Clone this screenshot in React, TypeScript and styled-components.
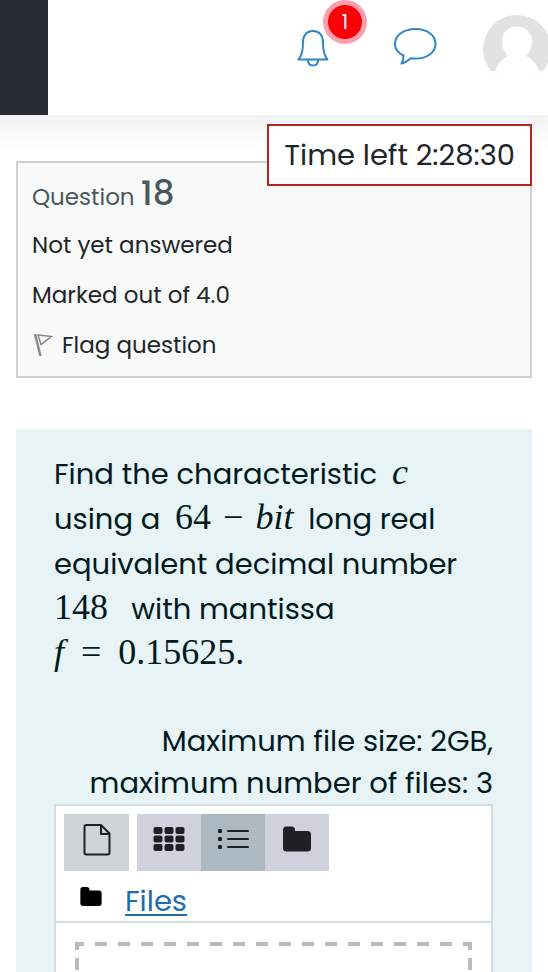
import React from "react";
import styled, { createGlobalStyle } from "styled-components";

const GlobalStyle = createGlobalStyle`
  *, *::before, *::after { box-sizing: border-box; }
  body {
    margin: 0;
    background: #fff;
    color: #212529;
    font-family: Poppins, Inter, "Noto Sans", sans-serif;
    font-size: 24px;
  }
  button { font: inherit; color: inherit; border: 0; padding: 0; background: none; cursor: pointer; }
  svg { display: block; }
`;

const Page = styled.div`
  height: 100vh;
  overflow-x: hidden;
  overflow-y: auto;
  scrollbar-width: none;
`;

const TopBar = styled.header`
  display: flex;
  align-items: stretch;
  justify-content: space-between;
  height: 115px;
  background: #fff;
`;

const DrawerToggle = styled.button`
  width: 48px;
  background: #272b34;
`;

const TopActions = styled.nav`
  display: flex;
  align-items: flex-start;
  padding-top: 15px;
  margin-right: -3px;
`;

const IconButton = styled.button<{ $gap: number }>`
  position: relative;
  display: flex;
  align-items: center;
  height: 66px;
  margin-right: ${(p) => p.$gap}px;
  color: #2f86c6;
`;

const Badge = styled.span`
  position: absolute;
  top: -15px;
  left: 27px;
  width: 44px;
  height: 44px;
  border: 5px solid #ff9fae;
  border-radius: 50%;
  background: #fb0007;
  color: #fff;
  font-size: 20px;
  line-height: 34px;
  text-align: center;
`;

const Main = styled.main`
  display: flex;
  flex-direction: column;
  gap: 51px;
  padding: 46px 16px 0;
  position: relative;
  background: linear-gradient(#f3f3f4, #fff 38px);
`;

const Timer = styled.div`
  position: absolute;
  top: 9px;
  right: 16px;
  padding: 0 15px;
  border: 2px solid #b8221f;
  background: #fff;
  font-size: 29px;
  line-height: 58px;
  white-space: nowrap;
`;

const InfoCard = styled.section`
  display: flex;
  flex-direction: column;
  align-items: flex-start;
  padding: 12px 14px 6px;
  border: 2px solid #cad1d5;
  background: #f8faf9;
  font-size: 23px;
  line-height: 50px;
`;

const QuestionTitle = styled.h3`
  margin: 0;
  color: #49585f;
  font-size: 23px;
  font-weight: 400;
  line-height: 45px;
`;

const QuestionNumber = styled.span`
  font-size: 34px;
  font-weight: 500;
  line-height: 1;
`;

const FlagButton = styled.button`
  display: flex;
  align-items: center;
  gap: 8px;
`;

const QuestionCard = styled.section`
  padding: 23px 39px 0 38px;
  background: #e7f3f5;
  color: #001a1e;
  font-size: 29px;
`;

const Prompt = styled.p`
  margin: 0;
  line-height: 45px;
`;

const MathText = styled.span<{ $pad: number }>`
  padding: 0 ${(p) => p.$pad}px;
  font-family: "Liberation Serif", serif;
  font-size: 36px;
  line-height: 1;
  white-space: nowrap;
`;

const Operator = styled.span<{ $pad: number }>`
  padding: 0 ${(p) => p.$pad}px;
`;

const Restrictions = styled.p`
  margin: 43px 0 0;
  line-height: 42px;
  text-align: right;
`;

const FileManager = styled.div`
  border: 2px solid #d3dee0;
  background: #fff;
`;

const Toolbar = styled.div`
  display: flex;
  align-items: flex-start;
  gap: 8px;
  padding: 8px 8px 0;
`;

const ButtonGroup = styled.div`
  display: flex;
`;

const ToolButton = styled.button<{ $tone: "plain" | "view" | "active" }>`
  display: flex;
  justify-content: center;
  width: ${(p) => (p.$tone === "plain" ? 65 : 64)}px;
  height: 57px;
  padding-top: 9px;
  background: ${(p) => ({ plain: "#ced4d7", view: "#cfd2dc", active: "#acb8c2" })[p.$tone]};
  color: #1d2125;
`;

const PathBar = styled.div`
  display: flex;
  align-items: flex-start;
  gap: 23px;
  height: 52px;
  padding: 16px 0 0 24px;
  border-bottom: 2px solid #d3dee0;
  color: #000;
`;

const PathLink = styled.a`
  color: #1f6cac;
  font-size: 29px;
  line-height: 28px;
  text-decoration: underline;
  text-decoration-thickness: 2px;
  text-underline-offset: 3px;
`;

const DropZone = styled.div`
  height: 140px;
  margin: 19px;
  background:
    repeating-linear-gradient(90deg, #bababa 0 12px, transparent 12px 23px) 100% 0 / calc(100% + 3px) 4px no-repeat,
    repeating-linear-gradient(180deg, #bababa 0 12px, transparent 12px 20px) 0 -4px / 4px 100% no-repeat,
    repeating-linear-gradient(180deg, #bababa 0 12px, transparent 12px 20px) 100% -4px / 4px 100% no-repeat;
`;

const BellIcon = () => (
  <svg width="34" height="38" viewBox="0 0 34 38" fill="none" stroke="currentColor" strokeWidth="2" strokeLinejoin="round">
    <path d="M2.500 30.500C6.500 26 7 21 7 13.500C7 6 11 2 17 2S27 6 27 13.500C27 21 27.500 26 31.500 30.500Z" />
    <path d="M12 31C12 34.500 14 36.500 17 36.500S22 34.500 22 31" />
  </svg>
);

const ChatIcon = () => (
  <svg width="44" height="40" viewBox="0 0 44 40" fill="none" stroke="currentColor" strokeWidth="2" strokeLinejoin="round">
    <path d="M10.500 27.500C5 25 2 21 2 16C2 7.500 10.500 1 22.500 1S42.500 7.500 42.500 16S34 30.500 22.500 30.500C21 30.500 19.500 30.400 18 30.200C15 32.500 12 35 8.500 35.500C10 33 10.500 30.500 10.500 27.500Z" />
  </svg>
);

const AvatarIcon = () => (
  <svg width="68" height="68" viewBox="0 0 68 68">
    <defs>
      <clipPath id="avatar-clip"><circle cx="34" cy="35" r="34" /></clipPath>
    </defs>
    <g clipPath="url(#avatar-clip)">
      <rect width="68" height="68" fill="#e2e2e3" />
      <path d="M34 12.500C25 12.500 19 18.500 19 27C19 33 21 38 25 42C19 45 13 51 11 60V68H57V60C55 51 49 45 43 42C47 38 49 33 49 27C49 18.500 43 12.500 34 12.500Z" fill="#fff" />
      <rect y="57" width="68" height="11" fill="#fff" />
    </g>
  </svg>
);

const FlagIcon = () => (
  <svg width="22" height="26" viewBox="0 0 22 26" fill="none" stroke="#858789">
    <path d="M3 2L8.500 24" strokeWidth="2.500" />
    <path d="M6 3L19.500 4.500L9 12.500Z" strokeWidth="1.500" />
  </svg>
);

const FileIcon = () => (
  <svg width="28" height="34" viewBox="0 0 28 34" fill="none" stroke="currentColor" strokeWidth="2" strokeLinejoin="round">
    <path d="M1.500 4Q1.500 2 3.500 2H18L26.500 10.500V29.500Q26.500 31.500 24.500 31.500H3.500Q1.500 31.500 1.500 29.500Z" />
    <path d="M18 2V11H26.500" />
  </svg>
);

const GridIcon = () => (
  <svg width="32" height="32" viewBox="0 0 32 32" fill="currentColor">
    {[4, 12.5, 21].map((y) => [0.5, 11.5, 22.5].map((x) => <rect key={`${x}-${y}`} x={x} y={y} width="9" height="7" rx="2" />))}
  </svg>
);

const ListIcon = () => (
  <svg width="32" height="32" viewBox="0 0 32 32" fill="currentColor">
    {[8, 16, 24].map((y) => (
      <React.Fragment key={y}>
        <rect x="1" y={y - 2} width="4" height="4" rx="1" />
        <rect x="10" y={y - 1} width="22" height="2" rx="1" />
      </React.Fragment>
    ))}
  </svg>
);

const FolderIcon = ({ width, height }: { width: number; height: number }) => (
  <svg width={width} height={height} viewBox="0 0 28 25" fill="currentColor">
    <path d="M0 3.500Q0 0 3.500 0H8.500Q12 0 12 3.500V4.500H24.500Q28 4.500 28 8V21.500Q28 25 24.500 25H3.500Q0 25 0 21.500Z" />
  </svg>
);

export default function App() {
  return (
    <Page>
      <GlobalStyle />
      <TopBar>
        <DrawerToggle type="button" aria-label="Open drawer" />
        <TopActions aria-label="User">
          <IconButton type="button" aria-label="Notifications" $gap={63}>
            <BellIcon />
            <Badge>1</Badge>
          </IconButton>
          <IconButton type="button" aria-label="Messages" $gap={46}>
            <ChatIcon />
          </IconButton>
          <IconButton type="button" aria-label="Account" $gap={0}>
            <AvatarIcon />
          </IconButton>
        </TopActions>
      </TopBar>
      <Main>
        <InfoCard>
          <QuestionTitle>
            Question <QuestionNumber>18</QuestionNumber>
          </QuestionTitle>
          <div>Not yet answered</div>
          <div>Marked out of 4.0</div>
          <FlagButton type="button">
            <FlagIcon />
            Flag question
          </FlagButton>
        </InfoCard>
        <Timer role="timer">Time left 2:28:30</Timer>
        <QuestionCard>
          <Prompt>
            Find the characteristic <MathText $pad={7}><i>c</i></MathText> using a{" "}
            <MathText $pad={7}>64<Operator $pad={12}>−</Operator><i>bit</i></MathText> long real equivalent decimal number{" "}
            <MathText $pad={0}>148</MathText>&nbsp;&nbsp; with mantissa{" "}
            <MathText $pad={0}><i>f</i><Operator $pad={17}>=</Operator>0.15625.</MathText>
          </Prompt>
          <Restrictions>Maximum file size: 2GB, maximum number of files: 3</Restrictions>
          <FileManager>
            <Toolbar>
              <ToolButton type="button" aria-label="Add file" $tone="plain">
                <FileIcon />
              </ToolButton>
              <ButtonGroup role="group" aria-label="View">
                <ToolButton type="button" aria-label="Icons" $tone="view">
                  <GridIcon />
                </ToolButton>
                <ToolButton type="button" aria-label="List" aria-pressed="true" $tone="active">
                  <ListIcon />
                </ToolButton>
                <ToolButton type="button" aria-label="Tree" $tone="view">
                  <FolderIcon width={28} height={32} />
                </ToolButton>
              </ButtonGroup>
            </Toolbar>
            <PathBar>
              <FolderIcon width={22} height={19} />
              <PathLink href="#files">Files</PathLink>
            </PathBar>
            <DropZone />
          </FileManager>
        </QuestionCard>
      </Main>
    </Page>
  );
}
